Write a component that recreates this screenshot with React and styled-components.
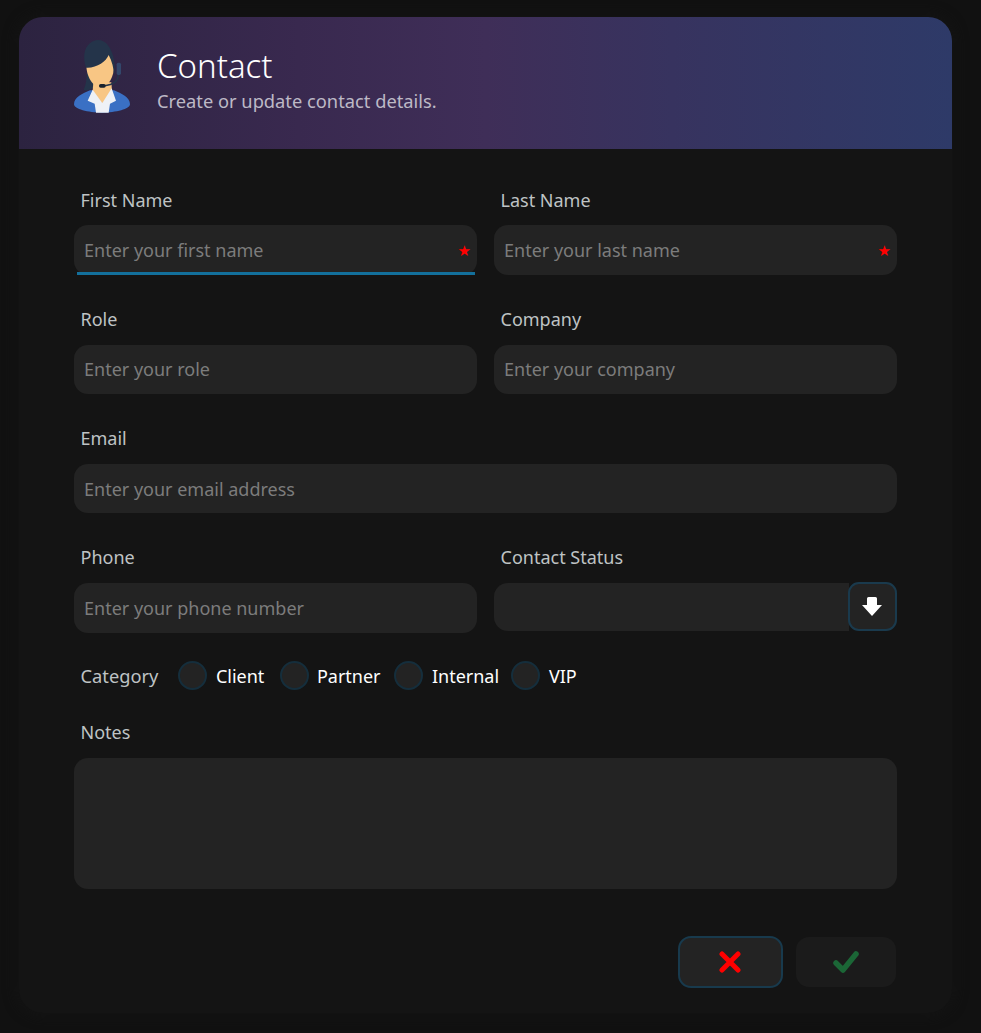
import React from "react";
import styled, { createGlobalStyle } from "styled-components";

const Global = createGlobalStyle`
  html, body { margin: 0; padding: 0; background: #111111; }
  * { box-sizing: border-box; }
`;

const Page = styled.div`
  width: 981px;
  height: 1033px;
  padding: 17px 29px 20px 19px;
  background: #111111;
  font-family: "Noto Sans", "Open Sans", sans-serif;
`;

const Card = styled.main`
  height: 996px;
  border-radius: 24px;
  background: #141414;
  box-shadow: 0 0 12px 4px rgba(20, 20, 20, 0.8);
  overflow: hidden;
  display: flex;
  flex-direction: column;
`;

const Header = styled.header`
  height: 132px;
  flex: none;
  display: flex;
  align-items: flex-start;
  gap: 7px;
  padding: 8px 0 0 31px;
  background: linear-gradient(90deg, #2c2340 0%, #39294f 30%, #3f2e58 50%, #37335f 70%, #2e3a68 100%);
`;

const Heading = styled.div`
  display: flex;
  flex-direction: column;
  padding-top: 18px;
`;

const Title = styled.h1`
  margin: 0;
  font-size: 33px;
  line-height: 46px;
  font-weight: 300;
  color: #ffffff;
`;

const Subtitle = styled.p`
  margin: 0;
  font-size: 18.3px;
  line-height: 24px;
  color: #bdb9c6;
`;

const Form = styled.form`
  flex: 1;
  display: flex;
  flex-direction: column;
  padding: 38.5px 55px 0;
`;

const Row = styled.div`
  display: grid;
  grid-template-columns: ${(p) => (p.$single ? "1fr" : "403px 403px")};
  column-gap: 17px;
  margin-bottom: 31.7px;
`;

const Field = styled.div`
  display: flex;
  flex-direction: column;
  min-width: 0;
`;

const Label = styled.label`
  display: block;
  padding-left: 6.5px;
  font-size: 18px;
  line-height: 25px;
  height: 37.9px;
  color: #bfc3c4;
`;

const InputWrap = styled.div`
  position: relative;
  height: 49.6px;

  ${(p) =>
    p.$focused &&
    `&::after {
      content: "";
      position: absolute;
      left: 3px;
      right: 2px;
      bottom: 0;
      height: 2.5px;
      background: #13709c;
    }`}
`;

const Input = styled.input`
  width: 100%;
  height: 100%;
  border: 0;
  outline: 0;
  border-radius: 14px;
  padding: 0 10px;
  background: #232323;
  color: #ffffff;
  font-family: inherit;
  font-size: 18px;

  &::placeholder {
    color: #7c7c7c;
    opacity: 1;
  }
`;

const Star = styled.span`
  position: absolute;
  right: 6px;
  top: 16px;
  font-family: "DejaVu Sans", sans-serif;
  font-size: 15px;
  line-height: 20px;
  color: #ff0000;
`;

const Select = styled.div`
  display: flex;
  height: 49.6px;
`;

const SelectValue = styled.div`
  flex: 1;
  height: 48px;
  background: #232323;
  border-radius: 14px 0 0 14px;
`;

const ArrowButton = styled.button`
  width: 49.5px;
  height: 49.5px;
  padding: 0;
  margin: -1px 0 0 -1px;
  display: flex;
  align-items: center;
  justify-content: center;
  background: #232323;
  border: 2.5px solid #1a3a4d;
  border-radius: 11px;
`;

const CategoryRow = styled.div`
  display: flex;
  align-items: center;
  height: 30px;
  margin-top: -3.3px;
  padding-left: 6.5px;
`;

const CategoryLabel = styled.span`
  font-size: 18.3px;
  color: #bfc3c4;
  margin-right: 19.5px;
`;

const Radio = styled.label`
  display: flex;
  flex: none;
  align-items: center;
  width: ${(p) => p.$width}px;
  font-size: 18px;
  color: #ffffff;
  gap: ${(p) => p.$gap}px;
`;

const RadioDot = styled.span`
  width: 29px;
  height: 29px;
  border-radius: 50%;
  background: #232323;
  border: 2.5px solid #152e3c;
`;

const NotesField = styled(Field)`
  margin-top: 29px;
`;

const Notes = styled.textarea`
  display: block;
  width: 100%;
  height: 131px;
  border: 0;
  outline: 0;
  resize: none;
  border-radius: 14px;
  background: #232323;
`;

const Actions = styled.div`
  display: flex;
  justify-content: flex-end;
  align-items: center;
  gap: 13px;
  margin-top: 47px;
  padding-right: 1.5px;
`;

const CancelButton = styled.button`
  width: 104.5px;
  height: 52px;
  display: flex;
  align-items: center;
  justify-content: center;
  padding: 0;
  background: #232323;
  border: 2.5px solid #183a4d;
  border-radius: 13px;
`;

const SaveButton = styled.button`
  width: 100px;
  height: 50px;
  display: flex;
  align-items: center;
  justify-content: center;
  padding: 0;
  background: #1b1b1b;
  border: 0;
  border-radius: 13px;
`;

const Avatar = () => (
  <svg width="100" height="100" viewBox="0 0 300 300" style={{ flex: "none" }}>
    <path d="M110 145 C110 168 106 184 101 194 C110 200 124 194 134 184 L130 145 Z" fill="#24344a" />
    <path d="M72 238 C72 216 98 206 120 196 L192 196 C214 206 240 216 240 238 C240 252 198 263 156 263 C114 263 72 252 72 238 Z" fill="#3a70c4" />
    <path d="M130 172 L128 198 L157 236 L186 198 L184 172 Z" fill="#f8c684" />
    <path d="M128 194 L113 227 L134 236 L138 263 L176 263 L180 236 L198 227 L185 190 L157 234 Z" fill="#eef1f6" />
    <path d="M109 122 C110 155 128 186 152 186 C176 186 192 155 192 122 L180 88 L140 105 Z" fill="#f8c684" />
    <path d="M108 128 C98 98 102 70 118 56 C136 40 160 42 175 62 C190 82 198 118 193 152 C191 130 186 108 176 90 C168 110 140 130 108 128 Z" fill="#24344a" />
    <rect x="200" y="113" width="13" height="37" rx="5" fill="#33476b" />
    <path d="M205 150 C204 168 194 178 160 183" fill="none" stroke="#24344a" strokeWidth="4" />
    <rect x="147" y="177" width="20" height="11" rx="5" fill="#18222e" />
  </svg>
);

const DownArrow = () => (
  <svg width="20" height="19" viewBox="0 0 20 19" fill="#ffffff">
    <path d="M5 1.5 Q5 0 6.5 0 H13.5 Q15 0 15 1.5 V8 H20 L10 19 L0 8 H5 Z" />
  </svg>
);

const CrossIcon = () => (
  <svg width="22" height="22" viewBox="0 0 22 22" stroke="#ff0000" strokeWidth="5" strokeLinecap="round">
    <path d="M3 3 L19 19 M19 3 L3 19" />
  </svg>
);

const CheckIcon = () => (
  <svg width="26" height="22" viewBox="0 0 26 22" fill="none" stroke="#1b6636" strokeWidth="5.5" strokeLinecap="round" strokeLinejoin="round">
    <path d="M3 12 L10 19 L23 3" />
  </svg>
);

const TextField = ({ label, placeholder, required, focused }) => (
  <Field>
    <Label>{label}</Label>
    <InputWrap $focused={focused}>
      <Input placeholder={placeholder} />
      {required && <Star>★</Star>}
    </InputWrap>
  </Field>
);

const categories = [
  { name: "Client", width: 102, gap: 9 },
  { name: "Partner", width: 114, gap: 8 },
  { name: "Internal", width: 117, gap: 9 },
  { name: "VIP", width: 70, gap: 9 },
];

export default function App() {
  return (
    <Page>
      <Global />
      <Card>
        <Header>
          <Avatar />
          <Heading>
            <Title>Contact</Title>
            <Subtitle>Create or update contact details.</Subtitle>
          </Heading>
        </Header>
        <Form>
          <Row>
            <TextField label="First Name" placeholder="Enter your first name" required focused />
            <TextField label="Last Name" placeholder="Enter your last name" required />
          </Row>
          <Row>
            <TextField label="Role" placeholder="Enter your role" />
            <TextField label="Company" placeholder="Enter your company" />
          </Row>
          <Row $single>
            <TextField label="Email" placeholder="Enter your email address" />
          </Row>
          <Row>
            <TextField label="Phone" placeholder="Enter your phone number" />
            <Field>
              <Label>Contact Status</Label>
              <Select>
                <SelectValue />
                <ArrowButton type="button" aria-label="Open">
                  <DownArrow />
                </ArrowButton>
              </Select>
            </Field>
          </Row>
          <CategoryRow>
            <CategoryLabel>Category</CategoryLabel>
            {categories.map((c) => (
              <Radio key={c.name} $width={c.width} $gap={c.gap}>
                <RadioDot />
                {c.name}
              </Radio>
            ))}
          </CategoryRow>
          <NotesField>
            <Label>Notes</Label>
            <Notes />
          </NotesField>
          <Actions>
            <CancelButton type="button" aria-label="Cancel">
              <CrossIcon />
            </CancelButton>
            <SaveButton type="button" aria-label="Save">
              <CheckIcon />
            </SaveButton>
          </Actions>
        </Form>
      </Card>
    </Page>
  );
}
